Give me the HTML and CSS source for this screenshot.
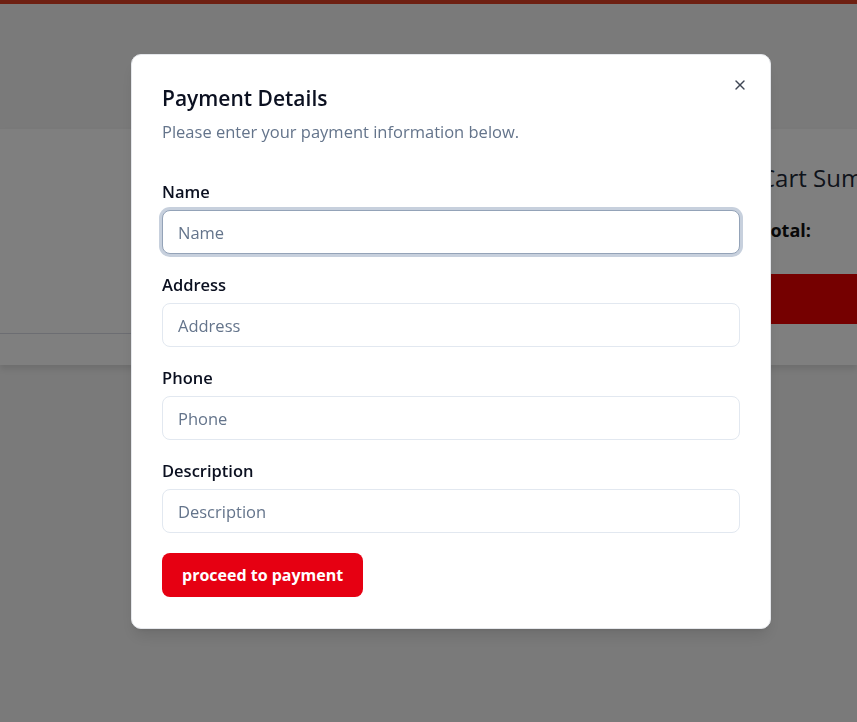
FILE: index.html
```html
<!DOCTYPE html>
<html lang="en">
<head>
<meta charset="utf-8">
<title>Cart</title>
<link rel="stylesheet" href="styles.css">
</head>
<body>
<div class="topbar"></div>
<header class="header"></header>
<section class="cart">
  <div class="cart-items">
    <div class="items-list"></div>
  </div>
  <aside class="summary">
    <h2 class="summary-title">Cart Summary</h2>
    <p class="summary-total">Total:</p>
    <button class="summary-btn" aria-label="Checkout"></button>
  </aside>
</section>

<div class="overlay"></div>
<div class="modal" role="dialog">
  <button class="close" aria-label="Close">
    <svg width="16" height="16" viewBox="0 0 24 24" fill="none" stroke="currentColor" stroke-width="2" stroke-linecap="round" stroke-linejoin="round"><path d="M18 6 6 18"/><path d="m6 6 12 12"/></svg>
  </button>
  <h2 class="modal-title">Payment Details</h2>
  <p class="modal-desc">Please enter your payment information below.</p>
  <form class="form">
    <div class="field">
      <label class="label" for="name">Name</label>
      <input class="input focused" id="name" placeholder="Name">
    </div>
    <div class="field">
      <label class="label" for="address">Address</label>
      <input class="input" id="address" placeholder="Address">
    </div>
    <div class="field">
      <label class="label" for="phone">Phone</label>
      <input class="input" id="phone" placeholder="Phone">
    </div>
    <div class="field">
      <label class="label" for="desc">Description</label>
      <input class="input" id="desc" placeholder="Description">
    </div>
    <div class="actions">
      <button type="button" class="pay-btn">proceed to payment</button>
    </div>
  </form>
</div>
</body>
</html>
```
FILE: styles.css
```css
* { box-sizing: border-box; }
html, body { margin: 0; padding: 0; }
body {
  background: #f4f4f4;
  font-family: "Open Sans", "Noto Sans", sans-serif;
  color: #0f172a;
  height: 722px;
  overflow: hidden;
}
.topbar { height: 4px; background: rgb(220, 64, 36); }
.header { height: 125px; }
.cart {
  display: grid;
  grid-template-columns: 744px 1fr;
  background: #fff;
  height: 236px;
  box-shadow: 0 4px 6px rgba(0,0,0,0.1);
}
.cart-items { padding: 0; }
.items-list { height: 205px; border-bottom: 1px solid #d8dae4; }
.summary { padding: 33px 0 0 16px; white-space: nowrap; overflow: hidden; }
.summary-title { margin: 0; font-size: 24px; line-height: 32px; font-weight: 500; color: #1f2937; }
.summary-total { margin: 24px 0 0; font-size: 18px; line-height: 24px; font-weight: 700; color: #111; }
.summary-btn {
  display: block;
  margin-top: 32px; width: 100%; height: 50px; border: 0; background: #ea0000; color: #fff;
  font: inherit;
}
.overlay { position: fixed; inset: 0; background: rgba(0,0,0,0.5); }
.modal {
  position: fixed;
  left: 131px; top: 54px;
  width: 640px;
  background: #fff;
  border-radius: 10px;
  border: 1px solid #e5e7eb;
  padding: 29px 30px 31px;
  box-shadow: 0 10px 15px -3px rgba(0,0,0,0.1), 0 4px 6px -4px rgba(0,0,0,0.1);
}
.close {
  position: absolute; right: 20px; top: 20px;
  width: 20px; height: 20px; padding: 2px;
  border: 0; background: none; color: #3f4654;
  display: flex; align-items: center; justify-content: center;
}
.modal-title { margin: 0; font-size: 21px; line-height: 28px; font-weight: 600; color: #0b1020; }
.modal-desc { margin: 8px 0 0; font-size: 16.5px; line-height: 24px; color: #64748b; }
.form { margin-top: 36px; display: flex; flex-direction: column; gap: 19px; }
.field { display: flex; flex-direction: column; gap: 6px; }
.label { font-size: 16.5px; line-height: 24px; font-weight: 600; color: #0b1020; }
.input {
  height: 44px; width: 100%;
  border: 1px solid #e2e8f0; border-radius: 8px;
  padding: 0 15px;
  font: inherit; font-size: 16.5px; color: #0f172a;
  background: #fff; outline: none;
}
.input::placeholder { color: #64748b; }
.input.focused { box-shadow: 0 0 0 3px #c7d0dd; border-color: #94a3b8; }
.actions { margin-top: 1px; display: flex; }
.pay-btn {
  height: 44px; padding: 0 20px;
  border: 0; border-radius: 8px;
  background: #e60012; color: #fff;
  font: inherit; font-size: 16px; font-weight: 700;
}
```
